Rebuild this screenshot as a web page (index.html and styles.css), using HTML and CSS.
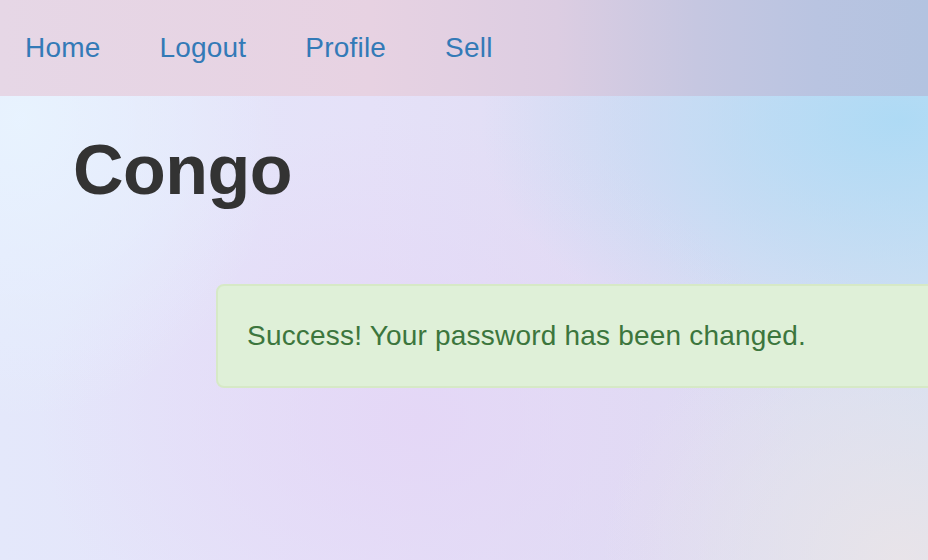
FILE: index.html
```html
<!DOCTYPE html>
<html>
<head>
<meta charset="utf-8">
<link rel="stylesheet" href="styles.css">
</head>
<body>
<nav class="navbar">
  <a href="#" class="nav-link">Home</a>
  <a href="#" class="nav-link">Logout</a>
  <a href="#" class="nav-link">Profile</a>
  <a href="#" class="nav-link">Sell</a>
</nav>
<main class="page">
  <h1 class="title">Congo</h1>
  <div class="alert">Success! Your password has been changed.</div>
</main>
</body>
</html>
```
FILE: styles.css
```css
html, body {
  margin: 0;
  padding: 0;
  height: 100%;
  overflow: hidden;
}
body {
  font-family: "Liberation Sans", Arial, sans-serif;
  background:
    radial-gradient(ellipse 420px 250px at 900px 120px, rgba(172, 218, 245, 0.95), rgba(172, 218, 245, 0) 100%),
    radial-gradient(ellipse 260px 300px at 20px 120px, rgba(232, 244, 255, 0.9), rgba(232, 244, 255, 0) 100%),
    radial-gradient(ellipse 300px 260px at 900px 560px, rgba(234, 228, 232, 0.9), rgba(234, 228, 232, 0) 100%),
    radial-gradient(ellipse 380px 300px at 420px 420px, rgba(228, 214, 246, 0.9), rgba(228, 214, 246, 0) 100%),
    linear-gradient(to right, #e4e8fb 0%, #e5e1f8 40%, #dfdcf3 70%, #d6e0f2 100%);
  width: 928px;
  height: 560px;
}
.navbar {
  height: 96px;
  display: flex;
  align-items: center;
  gap: 59px;
  padding-left: 25px;
  background: linear-gradient(to right, #e6d7e6 0%, #e7d2e2 40%, #dccde2 60%, #c6c7e1 75%, #b9c4e1 88%, #b3c3e0 100%);
}
.nav-link {
  font-size: 28px;
  color: #337ab7;
  text-decoration: none;
  line-height: 40px;
  letter-spacing: 0.2px;
}
.page {
  padding-top: 34px;
}
.title {
  margin: 0 0 0 73px;
  font-size: 70px;
  font-weight: bold;
  line-height: 80px;
  color: #333;
  letter-spacing: -0.5px;
}
.alert {
  margin: 74px 0 0 216px;
  width: 760px;
  box-sizing: border-box;
  padding: 30px 30px 30px 29px;
  background: #dff0d8;
  border: 2px solid #d6e9c6;
  border-radius: 8px;
  color: #3c763d;
  font-size: 28px;
  line-height: 40px;
  letter-spacing: 0.2px;
}
```
